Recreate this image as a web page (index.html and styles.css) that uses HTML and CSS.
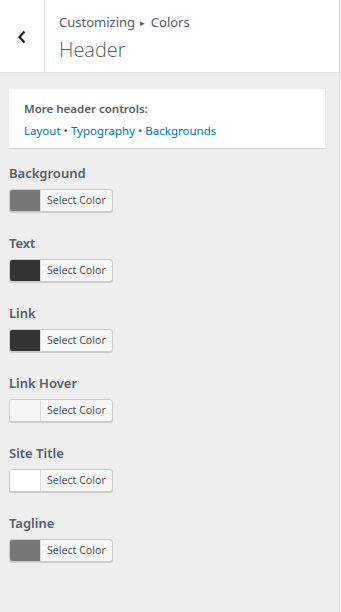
FILE: index.html
```html
<!DOCTYPE html>
<html lang="en">
<head>
    <meta charset="UTF-8">
    <meta name="viewport" content="width=device-width, initial-scale=1.0">
    <title>Customizing Header Colors</title>
    <link rel="stylesheet" href="styles.css">
</head>
<body>

    <div class="panel">
        <div class="panel-header">
            <button class="back" aria-label="Back">
                <svg width="10" height="14" viewBox="0 0 10 14"><path d="M7.5 1.5 L2.5 7 L7.5 12.5" fill="none" stroke="#222" stroke-width="2.2"/></svg>
            </button>
            <div class="titulo">
                <span class="migas">Customizing <span class="flecha">&#9656;</span> Colors</span>
                <h2>Header</h2>
            </div>
        </div>

        <div class="tarjeta">
            <p class="tarjeta-titulo">More header controls:</p>
            <p class="enlaces"><a href="#">Layout</a> &bull; <a href="#">Typography</a> &bull; <a href="#">Backgrounds</a></p>
        </div>

        <div class="control">
            <span class="etiqueta">Background</span>
            <button class="selector"><span class="muestra" style="background:#777777"></span><span class="texto">Select Color</span></button>
        </div>
        <div class="control">
            <span class="etiqueta">Text</span>
            <button class="selector"><span class="muestra" style="background:#333333"></span><span class="texto">Select Color</span></button>
        </div>
        <div class="control">
            <span class="etiqueta">Link</span>
            <button class="selector"><span class="muestra" style="background:#333333"></span><span class="texto">Select Color</span></button>
        </div>
        <div class="control">
            <span class="etiqueta">Link Hover</span>
            <button class="selector"><span class="muestra" style="background:#f5f5f5"></span><span class="texto">Select Color</span></button>
        </div>
        <div class="control">
            <span class="etiqueta">Site Title</span>
            <button class="selector"><span class="muestra" style="background:#ffffff"></span><span class="texto">Select Color</span></button>
        </div>
        <div class="control">
            <span class="etiqueta">Tagline</span>
            <button class="selector"><span class="muestra" style="background:#777777"></span><span class="texto">Select Color</span></button>
        </div>
    </div>

</body>
</html>
```

FILE: styles.css
```css
body {
    margin: 0;
    font-family: 'Noto Sans', 'Open Sans', sans-serif;
    background: #f1f1f1;
    color: #555d66;
}

.panel {
    width: 339px;
    min-height: 612px;
    background: #eeeeee;
    border-right: 1px solid #dddddd;
}

.panel-header {
    display: flex;
    height: 72px;
    background: #ffffff;
    border-bottom: 1px solid #dddddd;
}

.back {
    width: 45px;
    border: 0;
    border-right: 1px solid #dddddd;
    background: #ffffff;
    padding: 0;
    display: flex;
    align-items: center;
    justify-content: center;
    padding-top: 2px;
}

.titulo {
    padding: 12px 0 0 14px;
    display: flex;
    flex-direction: column;
}

.migas {
    font-size: 13px;
    color: #555d66;
    line-height: 20px;
}

.flecha {
    font-size: 9px;
    vertical-align: 1px;
    margin: 0 2px;
}

.titulo h2 {
    margin: 3px 0 0;
    font-family: 'Open Sans', 'Noto Sans', sans-serif;
    font-size: 20px;
    font-weight: 300;
    color: #555d66;
    line-height: 28px;
}

.tarjeta {
    margin: 16px 14px 15px 9px;
    padding: 10px 15px 7px;
    background: #ffffff;
    box-shadow: 0 1px 1px rgba(0, 0, 0, 0.1);
}

.tarjeta p {
    margin: 0;
    font-size: 11.5px;
    line-height: 20px;
}

.tarjeta-titulo {
    font-weight: 600;
    color: #555d66;
    margin-bottom: 2px !important;
}

.enlaces {
    color: #555d66;
}

.enlaces a {
    color: #0073aa;
    text-decoration: none;
}

.control {
    padding: 0 9px;
    height: 70px;
    display: flex;
    flex-direction: column;
    align-items: flex-start;
}

.etiqueta {
    font-size: 13px;
    font-weight: 600;
    line-height: 20px;
    margin-bottom: 6px;
}

.selector {
    display: flex;
    height: 23px;
    padding: 0;
    border: 1px solid #cccccc;
    border-radius: 3px;
    background: #f7f7f7;
    box-shadow: 0 1px 0 #cccccc;
    overflow: hidden;
    font-family: inherit;
}

.muestra {
    width: 30px;
    height: 100%;
    border-right: 1px solid #dddddd;
}

.texto {
    padding: 0 6px;
    font-size: 10.6px;
    line-height: 21px;
    color: #555555;
}
```
